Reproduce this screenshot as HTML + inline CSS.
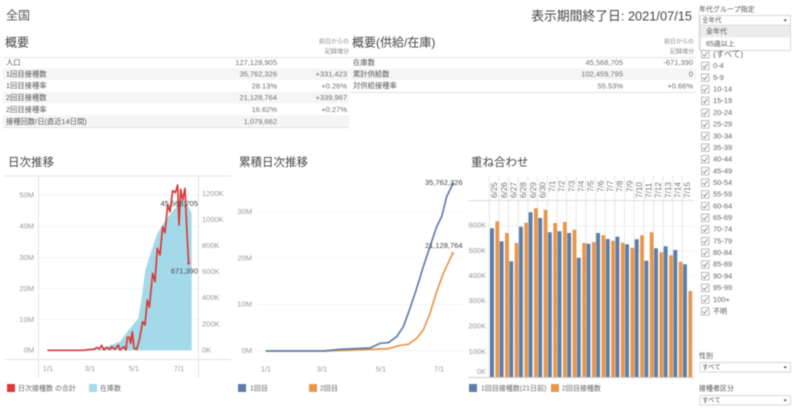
<!DOCTYPE html>
<html lang="ja">
<head>
<meta charset="utf-8">
<style>
html,body{margin:0;padding:0;background:#fff;width:800px;height:410px;overflow:hidden}
svg{display:block;filter:blur(.4px)}
text{font-family:"Liberation Sans","Noto Sans CJK JP",sans-serif;dominant-baseline:middle}
.t{font-size:11.5px;fill:#444}
.c{font-size:7.3px;fill:#555}
.v{font-size:7.5px;fill:#707070;text-anchor:end}
.h{font-size:6px;fill:#888;text-anchor:end}
.a{font-size:7.5px;fill:#999}
.e{text-anchor:end}
.m{text-anchor:middle}
.d{font-size:7.5px;fill:#444;text-anchor:end}
.l{font-size:7px;fill:#666}
.s{font-size:7px;fill:#555}
.n{font-size:7.5px;fill:#666}
.k{fill:#fff;stroke:#aaa;stroke-width:.8}
.ck{fill:none;stroke:#666;stroke-width:.7}
</style>
</head>
<body>
<svg width="800" height="410" viewBox="0 0 800 410" xmlns="http://www.w3.org/2000/svg">
<!-- Headers -->
<text x="6" y="16.5" style="font-size:12px;fill:#555">全国</text>
<text x="692" y="17" text-anchor="end" style="font-size:12.8px;fill:#444">表示期間終了日: 2021/07/15</text>
<text x="5" y="43.5" class="t" style="font-size:12px">概要</text>
<text x="352" y="43.5" class="t" style="font-size:12px">概要(供給/在庫)</text>
<text x="349" y="42" class="h">前日からの</text>
<text x="349" y="52" class="h">記録増分</text>
<text x="694" y="42" class="h">前日からの</text>
<text x="694" y="52" class="h">記録増分</text>

<!-- Table 1 -->
<rect x="3" y="57" width="346" height="1.2" fill="#e8e8e8"/>
<rect x="3" y="68.3" width="346" height="11.7" fill="#f5f5f5"/>
<rect x="3" y="91.7" width="346" height="11.7" fill="#f5f5f5"/>
<rect x="3" y="115" width="346" height="11.7" fill="#f5f5f5"/>
<rect x="3" y="127" width="346" height="1" fill="#e0e0e0"/>
<text x="6" y="63" class="c">人口</text><text x="277" y="63" class="v">127,128,905</text>
<text x="6" y="74.7" class="c">1回目接種数</text><text x="277" y="74.7" class="v">35,762,326</text><text x="347" y="74.7" class="v">+331,423</text>
<text x="6" y="86.3" class="c">1回目接種率</text><text x="277" y="86.3" class="v">28.13%</text><text x="347" y="86.3" class="v">+0.26%</text>
<text x="6" y="98" class="c">2回目接種数</text><text x="277" y="98" class="v">21,128,764</text><text x="347" y="98" class="v">+339,967</text>
<text x="6" y="110" class="c">2回目接種率</text><text x="277" y="110" class="v">16.62%</text><text x="347" y="110" class="v">+0.27%</text>
<text x="6" y="122" class="c">接種回数/日(直近14日間)</text><text x="277" y="122" class="v">1,079,662</text>

<!-- Table 2 -->
<rect x="350" y="57" width="346" height="1.2" fill="#e8e8e8"/>
<rect x="350" y="68.3" width="346" height="11.7" fill="#f5f5f5"/>
<rect x="350" y="92" width="346" height="1" fill="#e0e0e0"/>
<text x="353" y="63" class="c">在庫数</text><text x="623" y="63" class="v">45,568,705</text><text x="693" y="63" class="v">-671,390</text>
<text x="353" y="74.7" class="c">累計供給数</text><text x="623" y="74.7" class="v">102,459,795</text><text x="693" y="74.7" class="v">0</text>
<text x="353" y="86.3" class="c">対供給接種率</text><text x="623" y="86.3" class="v">55.53%</text><text x="693" y="86.3" class="v">+0.66%</text>
<rect x="698.5" y="10" width=".8" height="40" fill="#ddd"/>

<!-- Chart 1 -->
<text x="8" y="163" class="t">日次推移</text>
<path d="M38 195H198M38 226.5H198M38 257.7H198M38 288.5H198M38 319.5H198" stroke="#f2f2f2" stroke-width=".8" fill="none"/>
<g transform="translate(0,150) scale(.33333)">
<path fill="#a3d9e8" d="M142 600L300 598 330 586 360 575 380 548 415 505 425 445 435 365 450 315 470 255 490 220 505 200 525 175 550 145 565 170 575 190V601H142Z"/>
<path fill="none" stroke="#d93a3a" stroke-width="5" stroke-linejoin="round" d="M142 601L250 601 285 597 290 592 298 597 305 586 312 600 318 592 330 598 335 590 345 598 355 585 360 600 372 590 378 600 382 562 388 562 392 580 397 545 402 595 410 598 418 570 428 515 435 525 442 450 448 472 458 370 465 395 472 295 480 315 488 230 495 248 503 165 510 185 518 122 526 128 533 105 537 225 542 118 548 150 555 115 560 230 566 340"/>
<circle cx="566" cy="340" r="4" fill="#d93a3a"/>
</g>
<path d="M5 176H231M5 359.5H231" stroke="#e3e3e3" stroke-width="1" fill="none"/>
<path d="M38.5 176V378M198.5 176V378" stroke="#e3e3e3" stroke-width="1" fill="none"/>
<text x="34" y="195.5" class="a e">50M</text><text x="34" y="226.5" class="a e">40M</text><text x="34" y="258" class="a e">30M</text><text x="34" y="289" class="a e">20M</text><text x="34" y="320" class="a e">10M</text><text x="34" y="350.5" class="a e">0M</text>
<text x="202" y="194" class="a">1200K</text><text x="202" y="220" class="a">1000K</text><text x="202" y="246" class="a">800K</text><text x="202" y="272" class="a">600K</text><text x="202" y="298" class="a">400K</text><text x="202" y="324.5" class="a">200K</text><text x="202" y="350.5" class="a">0K</text>
<text x="48" y="369" class="a m">1/1</text><text x="90" y="369" class="a m">3/1</text><text x="134" y="369" class="a m">5/1</text><text x="179" y="369" class="a m">7/1</text>
<text x="198" y="204" class="d">45,568,705</text>
<text x="198" y="271.5" class="d" style="fill:#445">671,390</text>
<rect x="7" y="384" width="8" height="8" fill="#d93a3a"/><text x="18" y="388.5" class="l">日次接種数 の合計</text>
<rect x="89" y="384" width="8" height="8" fill="#a3d9e8"/><text x="100" y="388.5" class="l">在庫数</text>

<!-- Chart 2 -->
<text x="239" y="163" class="t">累積日次推移</text>
<path d="M257 211.7H463M257 258H463" stroke="#eee" stroke-width=".8" stroke-dasharray="1 1" fill="none"/>
<path d="M257 304.3H463M257 350.7H463" stroke="#f2f2f2" stroke-width=".8" fill="none"/>
<path d="M257 360H463" stroke="#eee" stroke-width=".8" stroke-dasharray="1 2" fill="none"/>
<g transform="translate(230,150) scale(.33333)" fill="none" stroke-width="5" stroke-linejoin="round">
<path stroke="#e8964a" d="M280 603L350 601 475 596 510 586 535 583 560 565 580 540 600 490 620 425 640 370 668 310"/>
<path stroke="#5b7da8" d="M107 603L280 603 330 598 420 594 450 580 475 578 500 560 520 530 540 475 560 415 580 350 600 290 620 230 635 200 650 140 668 103"/>
<circle cx="668" cy="310" r="4" fill="#e8964a" stroke="none"/>
<circle cx="668" cy="103" r="4" fill="#5b7da8" stroke="none"/>
</g>
<text x="252" y="212" class="a e">30M</text><text x="252" y="258.5" class="a e">20M</text><text x="252" y="304.5" class="a e">10M</text><text x="252" y="351" class="a e">0M</text>
<text x="266" y="369.5" class="a m">1/1</text><text x="322" y="369.5" class="a m">3/1</text><text x="381" y="369.5" class="a m">5/1</text><text x="439" y="369.5" class="a m">7/1</text>
<text x="462.5" y="183" class="d">35,762,326</text>
<text x="462.5" y="246" class="d">21,128,764</text>
<rect x="238" y="384" width="8" height="8" fill="#5b7da8"/><text x="250" y="388.5" class="l">1回目</text>
<rect x="309" y="384" width="8" height="8" fill="#e8964a"/><text x="320" y="388.5" class="l">2回目</text>

<!-- Chart 3 -->
<text x="471" y="163" class="t">重ね合わせ</text>
<path d="M468 225.8H694M468 251H694M468 276.2H694M468 301.4H694M468 326.6H694M468 351.8H694" stroke="#f2f2f2" stroke-width=".8" fill="none"/>
<path d="M489.3 176V377M499 176V377M508.6 176V377M518.3 176V377M527.9 176V377M537.6 176V377M547.2 176V377M556.9 176V377M566.5 176V377M576.2 176V377M585.8 176V377M595.5 176V377M605.1 176V377M614.8 176V377M624.4 176V377M634.1 176V377M643.7 176V377M653.4 176V377M663 176V377M672.7 176V377M682.3 176V377" stroke="#e2e2e2" stroke-width=".8" fill="none"/>
<path d="M468 200.5H694" stroke="#ddd" stroke-width="1" fill="none"/>
<path fill="none" stroke="#5b7da8" stroke-width="3.9" d="M491.95 377V228.3M501.6 377V241.3M511.25 377V261.3M520.9 377V226.7M530.55 377V212.3M540.2 377V218M549.85 377V232.3M559.5 377V231.3M569.15 377V233M578.8 377V257.7M588.45 377V243.7M598.1 377V233M607.75 377V239M617.4 377V236.7M627.05 377V244.3M636.7 377V239.3M646.35 377V260.7M656 377V248.3M665.65 377V246.3M675.3 377V250M684.95 377V264.3"/>
<path fill="none" stroke="#e8964a" stroke-width="3.8" d="M497.3 377V221.3M506.95 377V233M516.6 377V243M526.25 377V222.7M535.9 377V208.3M545.55 377V209.7M555.2 377V223M564.85 377V222M574.5 377V229.7M584.15 377V243M593.8 377V242M603.45 377V235.3M613.1 377V240.7M622.75 377V242.7M632.4 377V247.7M642.05 377V235.3M651.7 377V232.3M661.35 377V252.3M671 377V255.3M680.65 377V261.7M690.3 377V291"/>
<path d="M468 377.5H694" stroke="#ccc" stroke-width="1" fill="none"/>
<g style="font-size:8.2px;fill:#777">
<text transform="translate(495,198) rotate(-90)">6/25</text>
<text transform="translate(504.65,198) rotate(-90)">6/26</text>
<text transform="translate(514.3,198) rotate(-90)">6/27</text>
<text transform="translate(523.95,198) rotate(-90)">6/28</text>
<text transform="translate(533.6,198) rotate(-90)">6/29</text>
<text transform="translate(543.25,198) rotate(-90)">6/30</text>
<text transform="translate(552.9,192) rotate(-90)">7/1</text>
<text transform="translate(562.55,192) rotate(-90)">7/2</text>
<text transform="translate(572.2,192) rotate(-90)">7/3</text>
<text transform="translate(581.85,192) rotate(-90)">7/4</text>
<text transform="translate(591.5,192) rotate(-90)">7/5</text>
<text transform="translate(601.15,192) rotate(-90)">7/6</text>
<text transform="translate(610.8,192) rotate(-90)">7/7</text>
<text transform="translate(620.45,192) rotate(-90)">7/8</text>
<text transform="translate(630.1,192) rotate(-90)">7/9</text>
<text transform="translate(639.75,198) rotate(-90)">7/10</text>
<text transform="translate(649.4,198) rotate(-90)">7/11</text>
<text transform="translate(659.05,198) rotate(-90)">7/12</text>
<text transform="translate(668.7,198) rotate(-90)">7/13</text>
<text transform="translate(678.35,198) rotate(-90)">7/14</text>
<text transform="translate(688,198) rotate(-90)">7/15</text>
</g>
<text x="486" y="225.5" class="a e">600K</text><text x="486" y="251" class="a e">500K</text><text x="486" y="276" class="a e">400K</text><text x="486" y="301" class="a e">300K</text><text x="486" y="326.5" class="a e">200K</text><text x="486" y="352" class="a e">100K</text><text x="486" y="372" class="a e">0K</text>
<rect x="469" y="384" width="8" height="8" fill="#5b7da8"/><text x="481" y="388.5" class="l">1回目接種数(21日前)</text>
<rect x="551" y="384" width="8" height="8" fill="#e8964a"/><text x="562" y="388.5" class="l">2回目接種数</text>

<!-- Sidebar -->
<text x="699" y="9.5" class="s">年代グループ指定</text>
<rect x="700" y="15.5" width="90.5" height="35" fill="#fff" stroke="#ccc" stroke-width=".8"/>
<rect x="700.4" y="25.5" width="89.8" height="12" fill="#ececec"/>
<path d="M700 25.2H790.5" stroke="#ccc" stroke-width=".6"/>
<text x="702" y="20.5" class="s" style="font-size:6.5px">全年代</text>
<path d="M783.5 19.5h3.4l-1.7 2z" fill="#444"/>
<text x="706" y="31.5" class="s">全年代</text>
<text x="706" y="44" class="s">65歳以上</text>

<g>
<rect class="k" x="701.5" y="50.5" width="7.5" height="7.5"/><path class="ck" d="M703 54.5l1.5 1.8 3-4"/><text x="713" y="54.5" class="n" style="font-size:8.5px">(すべて)</text>
<rect class="k" x="701.5" y="62.2" width="7.5" height="7.5"/><path class="ck" d="M703 66.2l1.5 1.8 3-4"/><text x="713" y="66.2" class="n">0-4</text>
<rect class="k" x="701.5" y="73.9" width="7.5" height="7.5"/><path class="ck" d="M703 77.9l1.5 1.8 3-4"/><text x="713" y="77.9" class="n">5-9</text>
<rect class="k" x="701.5" y="85.5" width="7.5" height="7.5"/><path class="ck" d="M703 89.5l1.5 1.8 3-4"/><text x="713" y="89.5" class="n">10-14</text>
<rect class="k" x="701.5" y="97.2" width="7.5" height="7.5"/><path class="ck" d="M703 101.2l1.5 1.8 3-4"/><text x="713" y="101.2" class="n">15-19</text>
<rect class="k" x="701.5" y="108.9" width="7.5" height="7.5"/><path class="ck" d="M703 112.9l1.5 1.8 3-4"/><text x="713" y="112.9" class="n">20-24</text>
<rect class="k" x="701.5" y="120.6" width="7.5" height="7.5"/><path class="ck" d="M703 124.6l1.5 1.8 3-4"/><text x="713" y="124.6" class="n">25-29</text>
<rect class="k" x="701.5" y="132.3" width="7.5" height="7.5"/><path class="ck" d="M703 136.3l1.5 1.8 3-4"/><text x="713" y="136.3" class="n">30-34</text>
<rect class="k" x="701.5" y="143.9" width="7.5" height="7.5"/><path class="ck" d="M703 147.9l1.5 1.8 3-4"/><text x="713" y="147.9" class="n">35-39</text>
<rect class="k" x="701.5" y="155.6" width="7.5" height="7.5"/><path class="ck" d="M703 159.6l1.5 1.8 3-4"/><text x="713" y="159.6" class="n">40-44</text>
<rect class="k" x="701.5" y="167.3" width="7.5" height="7.5"/><path class="ck" d="M703 171.3l1.5 1.8 3-4"/><text x="713" y="171.3" class="n">45-49</text>
<rect class="k" x="701.5" y="179" width="7.5" height="7.5"/><path class="ck" d="M703 183l1.5 1.8 3-4"/><text x="713" y="183" class="n">50-54</text>
<rect class="k" x="701.5" y="190.7" width="7.5" height="7.5"/><path class="ck" d="M703 194.7l1.5 1.8 3-4"/><text x="713" y="194.7" class="n">55-59</text>
<rect class="k" x="701.5" y="202.3" width="7.5" height="7.5"/><path class="ck" d="M703 206.3l1.5 1.8 3-4"/><text x="713" y="206.3" class="n">60-64</text>
<rect class="k" x="701.5" y="214" width="7.5" height="7.5"/><path class="ck" d="M703 218l1.5 1.8 3-4"/><text x="713" y="218" class="n">65-69</text>
<rect class="k" x="701.5" y="225.7" width="7.5" height="7.5"/><path class="ck" d="M703 229.7l1.5 1.8 3-4"/><text x="713" y="229.7" class="n">70-74</text>
<rect class="k" x="701.5" y="237.4" width="7.5" height="7.5"/><path class="ck" d="M703 241.4l1.5 1.8 3-4"/><text x="713" y="241.4" class="n">75-79</text>
<rect class="k" x="701.5" y="249.1" width="7.5" height="7.5"/><path class="ck" d="M703 253.1l1.5 1.8 3-4"/><text x="713" y="253.1" class="n">80-84</text>
<rect class="k" x="701.5" y="260.7" width="7.5" height="7.5"/><path class="ck" d="M703 264.7l1.5 1.8 3-4"/><text x="713" y="264.7" class="n">85-89</text>
<rect class="k" x="701.5" y="272.4" width="7.5" height="7.5"/><path class="ck" d="M703 276.4l1.5 1.8 3-4"/><text x="713" y="276.4" class="n">90-94</text>
<rect class="k" x="701.5" y="284.1" width="7.5" height="7.5"/><path class="ck" d="M703 288.1l1.5 1.8 3-4"/><text x="713" y="288.1" class="n">95-99</text>
<rect class="k" x="701.5" y="295.8" width="7.5" height="7.5"/><path class="ck" d="M703 299.8l1.5 1.8 3-4"/><text x="713" y="299.8" class="n">100+</text>
<rect class="k" x="701.5" y="307.5" width="7.5" height="7.5"/><path class="ck" d="M703 311.5l1.5 1.8 3-4"/><text x="713" y="311.5" class="s">不明</text>
</g>

<text x="699" y="356" class="s">性別</text>
<rect x="700" y="362.5" width="90.5" height="9.5" fill="#fff" stroke="#ccc" stroke-width=".8"/>
<text x="702" y="367.5" class="s" style="font-size:6.5px">すべて</text>
<path d="M783.5 366.5h3.4l-1.7 2z" fill="#444"/>
<text x="699" y="388.5" class="s">接種者区分</text>
<rect x="700" y="395.5" width="90.5" height="9.5" fill="#fff" stroke="#ccc" stroke-width=".8"/>
<text x="702" y="400.5" class="s" style="font-size:6.5px">すべて</text>
<path d="M783.5 399.5h3.4l-1.7 2z" fill="#444"/>
</svg>
</body>
</html>
